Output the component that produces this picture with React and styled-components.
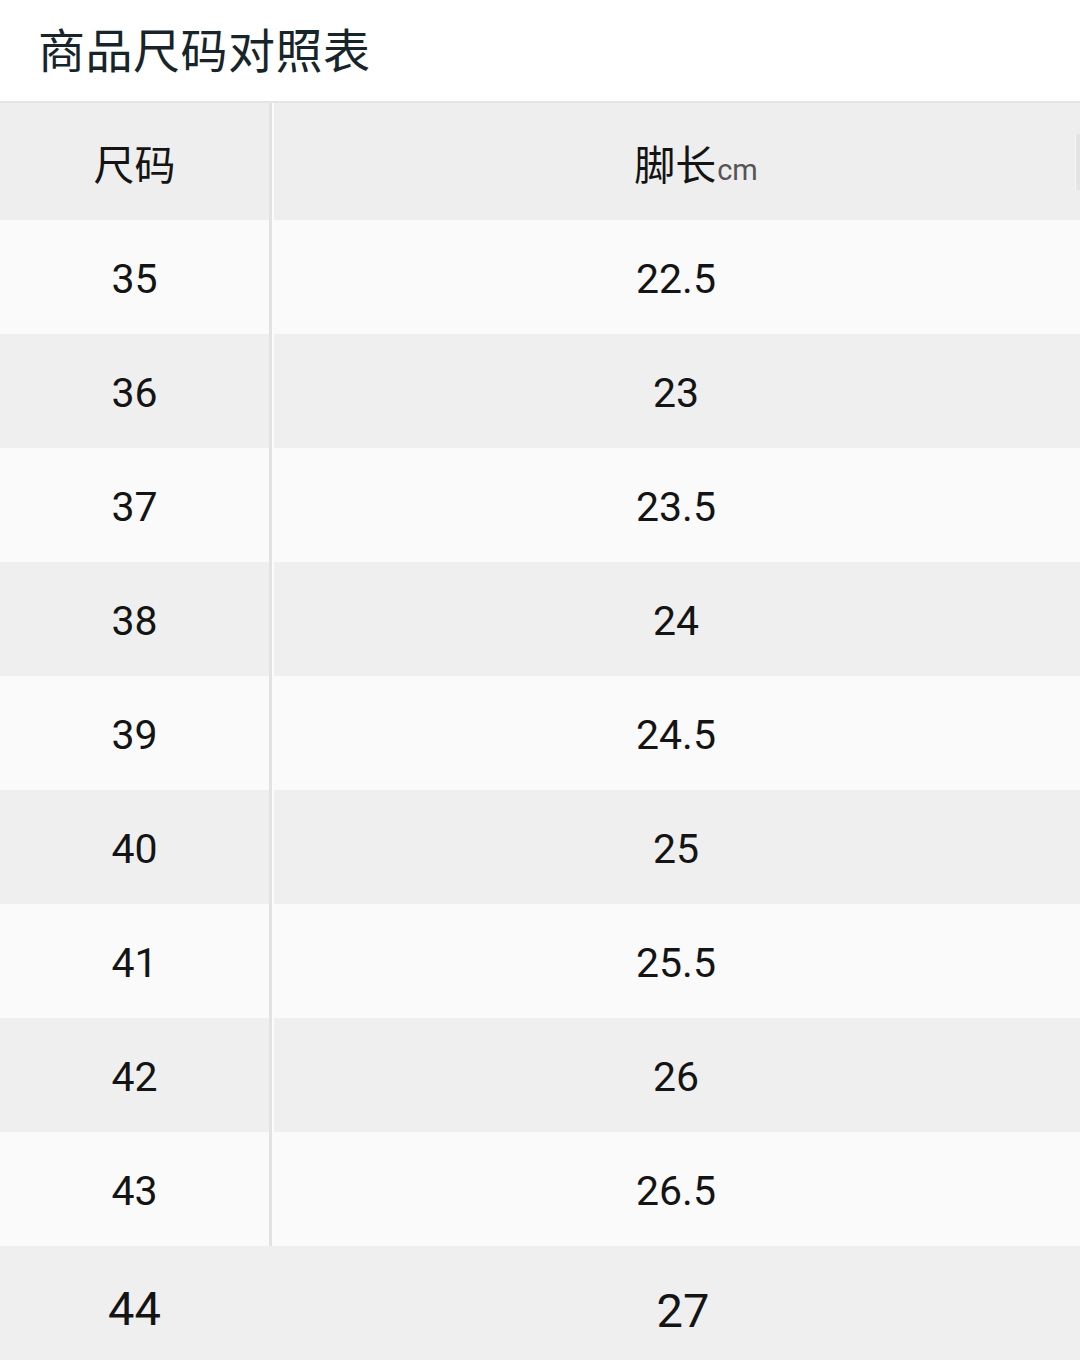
import React from "react";
import styled, { createGlobalStyle } from "styled-components";

const Global = createGlobalStyle`
  html, body { margin: 0; padding: 0; background: #efefef; }
  body { font-family: Roboto, "Noto Sans CJK SC", sans-serif; }
`;

const Page = styled.div`
  width: 1080px;
  height: 1360px;
  overflow: hidden;
  position: relative;
  background: #efefef;
`;

const TitleBar = styled.div`
  height: 103px;
  background: #ffffff;
  display: flex;
  align-items: center;
  padding-left: 38px;
  border-bottom: 2px solid #e4e4e4;
  box-sizing: border-box;
`;

const Title = styled.h1`
  margin: 0;
  margin-top: -6px;
  font-family: "Noto Sans CJK SC", sans-serif;
  font-weight: 400;
  font-size: 47px;
  letter-spacing: 0.5px;
  color: #17252a;
`;

const Row = styled.div`
  display: grid;
  grid-template-columns: 272px 1fr;
  height: ${(p) => p.$h || 114}px;
  background: ${(p) => p.$bg};
`;

const Cell = styled.div`
  display: flex;
  align-items: center;
  justify-content: center;
  color: #141414;
  font-family: Roboto, "Noto Sans CJK SC", sans-serif;
  font-size: ${(p) => p.$size || 41}px;
  padding-top: ${(p) => p.$pt ?? 4}px;
  padding-left: ${(p) => p.$pl || 0}px;
  box-sizing: border-box;
`;

const SizeCell = styled(Cell)`
  border-right: ${(p) => (p.$noLine ? "none" : "3px solid #e2e2e2")};
  box-shadow: ${(p) => (p.$noLine ? "none" : "2px 0 0 #fbfbfb")};
  margin-right: ${(p) => (p.$noLine ? "3px" : "0")};
`;

const HeadText = styled.span`
  font-family: "Noto Sans CJK SC", sans-serif;
  font-size: 41px;
  color: #141414;
`;

const Unit = styled.span`
  font-family: Roboto, sans-serif;
  font-size: 29px;
  color: #555;
  margin-left: 1px;
  position: relative;
  top: 8px;
`;

const ScrollThumb = styled.div`
  position: absolute;
  right: 0;
  top: 134px;
  width: 4px;
  height: 56px;
  background: #e4e4e4;
  border-left: 1px solid #f6f6f6;
`;

const rows = [
  ["35", "22.5"],
  ["36", "23"],
  ["37", "23.5"],
  ["38", "24"],
  ["39", "24.5"],
  ["40", "25"],
  ["41", "25.5"],
  ["42", "26"],
  ["43", "26.5"],
];

export default function App() {
  return (
    <>
      <Global />
      <Page>
        <TitleBar>
          <Title>商品尺码对照表</Title>
        </TitleBar>
        <Row $bg="#eeeeee" $h={117}>
          <SizeCell $pt={0}>
            <HeadText>尺码</HeadText>
          </SizeCell>
          <Cell $pl={40} $pt={0}>
            <HeadText>脚长</HeadText>
            <Unit>cm</Unit>
          </Cell>
        </Row>
        {rows.map(([s, l], i) => (
          <Row key={s} $bg={i % 2 === 0 ? "#fafafa" : "#efefef"}>
            <SizeCell>{s}</SizeCell>
            <Cell>{l}</Cell>
          </Row>
        ))}
        <Row $bg="#efefef" $h={124}>
          <SizeCell $noLine $size={47} $pt={0}>
            44
          </SizeCell>
          <Cell $size={47} $pt={4} $pl={14}>
            27
          </Cell>
        </Row>
        <ScrollThumb />
      </Page>
    </>
  );
}
